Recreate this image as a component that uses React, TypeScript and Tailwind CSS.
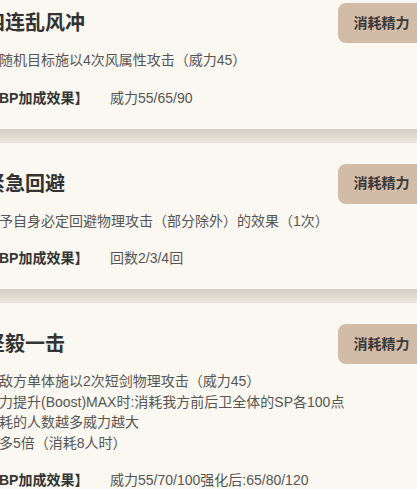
import React from "react";

type Skill = { title: string; lines: string[]; bp: string };

const skills: Skill[] = [
  { title: "四连乱风冲", lines: ["对随机目标施以4次风属性攻击（威力45）"], bp: "威力55/65/90" },
  { title: "紧急回避", lines: ["给予自身必定回避物理攻击（部分除外）的效果（1次）"], bp: "回数2/3/4回" },
  {
    title: "坚毅一击",
    lines: [
      "对敌方单体施以2次短剑物理攻击（威力45）",
      "能力提升(Boost)MAX时:消耗我方前后卫全体的SP各100点",
      "消耗的人数越多威力越大",
      "最多5倍（消耗8人时）",
    ],
    bp: "威力55/70/100强化后:65/80/120",
  },
];

const font = { fontFamily: '"Liberation Sans", "Noto Sans CJK SC", sans-serif' };

function Card({ s }: { s: Skill }) {
  return (
    <div className="bg-[#fbf8f2] px-4 pt-[21px] pb-[21px]">
      <div className="flex items-center justify-between h-[40px]">
        <div className="text-[20px] font-bold text-[#333333] leading-[28px]">{s.title}</div>
        <div className="h-[40px] w-[87px] rounded-[8px] bg-[#d2bba7] flex items-center justify-center text-[14px] font-bold text-[#3a3a3a]">
          消耗精力
        </div>
      </div>
      <div className="mt-[7px] text-[14px] leading-[20.5px] text-[#555555]">
        {s.lines.map((l, i) => (
          <div key={i} className="whitespace-nowrap">{l}</div>
        ))}
      </div>
      <div className="mt-[17px] flex text-[14px] leading-[20px] whitespace-nowrap">
        <div className="w-[125px] font-bold text-[#333333]">【BP加成效果】</div>
        <div className="text-[#555555]">{s.bp}</div>
      </div>
    </div>
  );
}

export default function App() {
  return (
    <div className="w-[417px] h-[489px] overflow-hidden bg-[#fbf8f2]" style={font}>
      <div className="w-[472px] ml-[-31px] mt-[-18px]">
        {skills.map((s, i) => (
          <React.Fragment key={i}>
            <Card s={s} />
            {i < skills.length - 1 && (
              <div className="h-[14px] bg-gradient-to-b from-[#d4cec4] to-[#ece7de]" />
            )}
          </React.Fragment>
        ))}
      </div>
    </div>
  );
}
